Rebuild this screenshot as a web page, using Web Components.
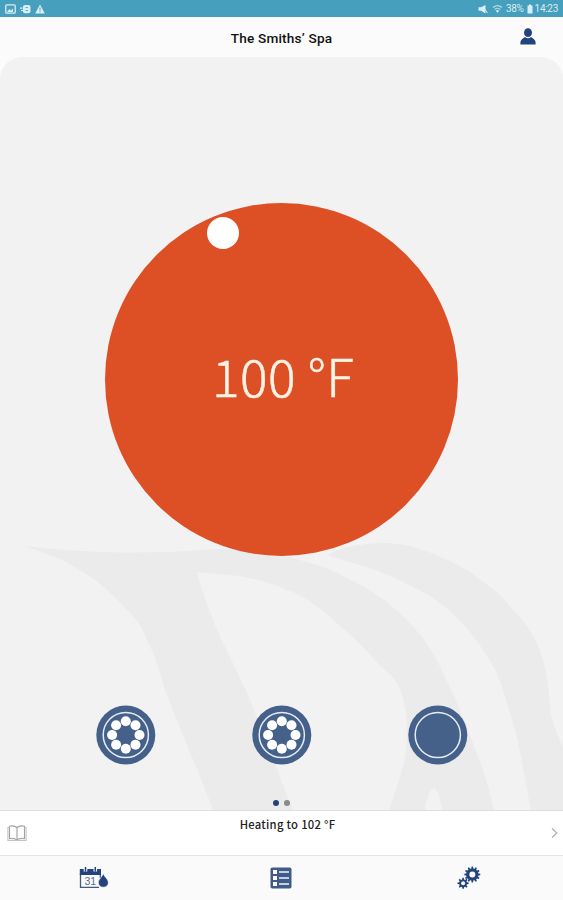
<!DOCTYPE html>
<html lang="en">
<head>
<meta charset="utf-8">
<meta name="viewport" content="width=device-width, initial-scale=1">
<title>Spa</title>
<style>
  body {
    margin: 0;
    background: #fbfbfb;
    font-family: Roboto, "Liberation Sans", sans-serif;
  }
</style>
</head>
<body>
<spa-app></spa-app>

<script>
// status-bar

class StatusBar extends HTMLElement {
  constructor() {
    super();
    const shadow = this.attachShadow({mode: 'open'});
    shadow.innerHTML = `
    <style>
      :host {
        align-items: center;
        background: #459fbd;
        box-sizing: border-box;
        color: #d9eef5;
        display: flex;
        height: 17px;
        justify-content: space-between;
        padding: 1px 5px 0 5px;
      }
      div { align-items: center; display: flex; }
      .left { gap: 4px; }
      .right { font-size: 10px; letter-spacing: -0.3px; line-height: 12px; }
      .right svg:first-child { margin-right: 4px; }
      .pct { margin: 0 3px 0 3px; }
      .time { margin-left: 2px; }
      svg { display: block; }
    </style>
    <div class="left">
      <svg width="11" height="10" viewBox="0 0 11 10"><rect x=".8" y=".8" width="9.4" height="8.4" rx="1" fill="none" stroke="currentColor" stroke-width="1.3"/><path d="M2 8l2.4-3 1.6 1.4L8 4.500V8z" fill="currentColor"/></svg>
      <svg width="11" height="10" viewBox="0 0 11 10"><path d="M0 4.200h2.500M1 6.500h2" stroke="currentColor" stroke-width="1.200"/><rect x="3" y="1" width="7.500" height="8.200" rx="2" fill="currentColor"/><path d="M5.500 3.500h2.500M5.500 6.500h2.500" stroke="#459fbd" stroke-width=".8"/></svg>
      <svg width="10" height="10" viewBox="0 0 10 10"><path d="M5 .5L9.800 9.500H.2z" fill="currentColor"/><path d="M5 3.500v3M5 7.300v1" stroke="#459fbd"/></svg>
    </div>
    <div class="right">
      <svg width="10" height="10" viewBox="0 0 10 10"><path d="M.5 3.300h2.500L7.500 1v8.500L3 6.700H.5z" fill="currentColor"/><path d="M6 4l3.500 5" stroke="currentColor" stroke-width="1"/></svg>
      <svg width="11" height="10" viewBox="0 0 11 10"><path d="M1 3.500Q5.500-.3 10 3.500M2.700 5.500Q5.500 3 8.300 5.500" fill="none" stroke="currentColor" stroke-width="1.100" opacity=".75"/><path d="M3.800 6.500Q5.500 5.500 7.200 6.500L5.500 9z" fill="currentColor"/></svg>
      <span class="pct">38%</span>
      <svg width="6" height="10" viewBox="0 0 6 10"><path d="M2 .5h2v1h1.500v8h-5v-8H2z" fill="currentColor"/></svg>
      <span class="time">14:23</span>
    </div>`;
  }
}

// title-bar

class TitleBar extends HTMLElement {
  constructor() {
    super();
    const shadow = this.attachShadow({mode: 'open'});
    shadow.innerHTML = `
    <style>
      :host {
        align-items: center;
        background: #fbfbfb;
        box-sizing: border-box;
        color: #111;
        display: grid;
        font-size: 13.6px;
        font-weight: 500;
        grid-template-columns: 1fr auto 1fr;
        height: 40px;
        padding: 0 27px;
      }
      .title { grid-column: 2; letter-spacing: 0.2px; line-height: 16px; padding-top: 1px; }
      svg { display: block; justify-self: end; margin-bottom: 1px; }
    </style>
    <span class="title"><slot></slot></span>
    <svg width="16" height="17" viewBox="0 0 16 17" fill="#24427c"><ellipse cx="8" cy="4.700" rx="4" ry="4.400"/><path d="M.4 16.500v-2C.4 12 2.500 11 5 9q3 2.500 6 0c2.500 2 4.600 3 4.600 5.500v2z"/></svg>`;
  }
}

// temp-dial

class TempDial extends HTMLElement {
  constructor() {
    super();
    const shadow = this.attachShadow({mode: 'open'});
    shadow.innerHTML = `
    <style>
      :host {
        align-items: center;
        background: #dd5026;
        border-radius: 50%;
        color: #fff3e6;
        display: flex;
        font-family: "Noto Sans CJK JP", "Noto Sans", sans-serif;
        font-size: 51.5px;
        font-weight: 300;
        height: 353px;
        justify-content: center;
        position: relative;
        width: 353px;
      }
      .value {
        -webkit-text-stroke: 0.5px #fff3e6;
        letter-spacing: 0.4px;
        line-height: 60px;
        padding: 0 0 9px 3px;
        white-space: nowrap;
      }
      .knob {
        background: #fff;
        border-radius: 50%;
        height: 32px;
        left: 102px;
        position: absolute;
        top: 14px;
        width: 32px;
      }
    </style>
    <span class="value"><slot></slot></span>
    <div class="knob"></div>`;
  }
}

// jet-button, with the "on" attribute the jets are drawn

class JetButton extends HTMLElement {
  constructor() {
    super();
    const shadow = this.attachShadow({mode: 'open'});
    let jets = '';
    if (this.hasAttribute('on')) {
      for (let i = 0; i < 8; i++) {
        const a = i * Math.PI / 4;
        const x = (29.8 + 13.7 * Math.cos(a)).toFixed(2);
        const y = (30 + 13.7 * Math.sin(a)).toFixed(2);
        jets += `<circle cx="${x}" cy="${y}" r="5" fill="#fff"/>`;
      }
    }
    shadow.innerHTML = `
    <style>
      :host { display: block; height: 60px; width: 60px; }
      svg { display: block; }
    </style>
    <svg width="60" height="60" viewBox="0 0 60 60">
      <circle cx="29.8" cy="30" r="29.5" fill="#456089"/>
      <circle cx="29.8" cy="30" r="22.6" fill="none" stroke="#e4ecf5" stroke-width="1.5"/>
      ${jets}
    </svg>`;
  }
}

// spa-panel

class SpaPanel extends HTMLElement {
  constructor() {
    super();
    const shadow = this.attachShadow({mode: 'open'});
    shadow.innerHTML = `
    <style>
      :host {
        align-items: center;
        background: #f2f2f2;
        border-radius: 22px 22px 0 0;
        box-sizing: border-box;
        display: flex;
        flex-direction: column;
        height: 753px;
        overflow: hidden;
        padding-top: 146px;
        position: relative;
      }
      .mark { left: 0; position: absolute; top: 0; }
      .jets {
        display: flex;
        gap: 96px;
        margin-top: 149px;
        position: relative;
      }
      .dots { display: flex; gap: 5px; margin-top: 35px; position: relative; }
      .dots i { background: #8a8a8a; border-radius: 50%; height: 6px; width: 6px; }
      .dots i:first-child { background: #24427c; }
    </style>
    <svg class="mark" width="563" height="753" viewBox="0 57 563 753" fill="#ebebeb">
      <path d="M25 546C80 553 150 555 215 549C260 548 320 562 345 577C362 585 374 592 388 603C405 617 416 629 424 640C434 654 439 664 445 677C452 692 458 704 463 717C475 748 487 778 494 810H442C440 799 438 790 434 788C430 790 426 799 425 810H389C398 785 407 760 407 735C407 715 405 702 399 687C394 677 389 673 381 667C369 653 356 639 341 627C322 609 307 597 287 590C274 584 260 580 244 577C228 574 213 574 197 572C201 589 208 606 215 625C225 649 241 677 252 705L293 810H213C197 767 180 730 165 690C158 666 154 653 147 640C142 627 137 620 130 613C118 600 108 590 95 580C84 572 73 566 60 559Z"/>
      <path d="M327 555C340 547 362 543 388 543C403 544 417 547 431 553C449 560 466 568 481 580C494 590 505 598 513 610C523 619 529 628 535 640C541 650 544 661 546 673C549 687 549 700 551 715C554 727 559 737 563 748V810H531C526 785 522 761 517 737C513 722 508 706 503 690C498 674 491 661 481 647C473 635 463 623 452 613C440 602 428 594 413 587C398 579 382 572 366 567Z"/>
    </svg>
    <slot name="dial"></slot>
    <div class="jets"><slot name="jet"></slot></div>
    <div class="dots"><i></i><i></i></div>`;
  }
}

// status-message

class StatusMessage extends HTMLElement {
  constructor() {
    super();
    const shadow = this.attachShadow({mode: 'open'});
    shadow.innerHTML = `
    <style>
      :host {
        background: #fff;
        border-bottom: 1px solid #e4e4e4;
        border-top: 1px solid #dedede;
        box-sizing: border-box;
        color: #222;
        display: grid;
        font-family: "Noto Sans CJK JP", "Noto Sans", sans-serif;
        font-size: 11.3px;
        font-weight: 500;
        grid-template-columns: 1fr auto 1fr;
        height: 46px;
        padding: 0 5px 0 7px;
      }
      svg { align-self: center; display: block; }
      .text { letter-spacing: 0.27px; line-height: 16px; padding: 5px 0 0 10px; }
      .next { justify-self: end; }
    </style>
    <svg width="20" height="17" viewBox="0 0 20 17" fill="none" stroke="#a0a0a0" stroke-width="1.1"><path d="M10 2.500C8 .8 5 .6 2.500 1.200V13.500C5 13 8 13.200 10 15C12 13.200 15 13 17.500 13.500V1.200C15 .6 12 .8 10 2.500V15"/><path d="M2.500 2.500H.9V15.400H19.100V2.500H17.500" stroke="#c4c4c4"/></svg>
    <span class="text"><slot></slot></span>
    <svg class="next" width="7" height="12" viewBox="0 0 7 12" fill="none" stroke="#b0b0b0" stroke-width="1.3"><path d="M1 1.500L5.800 6L1 10.500"/></svg>`;
  }
}

// tab-bar

// outline of a gear, centred on 0,0
function gear(teeth, outer, inner) {
  const pts = [];
  const step = Math.PI * 2 / teeth;
  for (let i = 0; i < teeth; i++) {
    [[-.3, inner], [-.17, outer], [.17, outer], [.3, inner]].forEach(([o, r]) => {
      const a = (i + o) * step;
      pts.push((r * Math.sin(a)).toFixed(2) + ' ' + (-r * Math.cos(a)).toFixed(2));
    });
  }
  return 'M' + pts.join('L') + 'Z';
}

class TabBar extends HTMLElement {
  constructor() {
    super();
    const shadow = this.attachShadow({mode: 'open'});
    shadow.innerHTML = `
    <style>
      :host {
        background: #fafafa;
        display: grid;
        grid-template-columns: repeat(3, 1fr);
        height: 44px;
      }
      svg { align-self: center; display: block; justify-self: center; }
      text { font: 10.5px "Liberation Sans", sans-serif; }
    </style>
    <svg width="30" height="24" viewBox="0 0 30 24">
      <path d="M1.500 7V21.300H20" fill="none" stroke="#405b86" stroke-width="1.3"/>
      <path d="M21.300 8V12" stroke="#405b86" stroke-width="1.200"/>
      <path d="M.8 3H22V9H.8Z" fill="#24427c"/>
      <path d="M6.500 1V5.500M16.300 1V5.500" stroke="#fafafa" stroke-width="3.600"/>
      <path d="M6.500 1V5.500M16.300 1V5.500" stroke="#24427c" stroke-width="1.500"/>
      <text x="5.500" y="18.700" fill="#5b6f90">31</text>
      <path d="M24.300 7.500C25.300 11 29.300 13 29.300 16.500C29.300 19.500 27.200 21.200 24.300 21.200S19.400 19.500 19.400 16.500C19.400 13 23.300 11 24.300 7.500Z" fill="#24427c" stroke="#fafafa" stroke-width=".6"/>
    </svg>
    <svg width="22" height="22" viewBox="0 0 22 22">
      <rect x=".5" y=".5" width="21" height="21" rx="1.800" fill="#405b88"/>
      <path d="M3 3h4v4H3zM3 9h4v4H3zM3 15h4v4H3z" fill="#fff"/>
      <path d="M9 5h10M9 11h10M9 17h10" stroke="#c3d0e2" stroke-width="2.200"/>
    </svg>
    <svg width="24" height="24" viewBox="0 0 24 24" fill="#24427c">
      <g transform="translate(15.300 8.500)"><path d="${gear(12, 8, 6.2)}"/><circle r="3" fill="#fafafa"/></g>
      <g transform="translate(6.100 17.300)"><path d="${gear(8, 5.6, 4)}"/><circle r="2" fill="#fafafa"/></g>
    </svg>`;
  }
}

// spa-app

class SpaApp extends HTMLElement {
  constructor() {
    super();
    const shadow = this.attachShadow({mode: 'open'});
    shadow.innerHTML = `
    <style>
      :host { display: flex; flex-direction: column; height: 900px; overflow: hidden; }
    </style>
    <status-bar></status-bar>
    <title-bar>The Smiths’ Spa</title-bar>
    <spa-panel>
      <temp-dial slot="dial">100 °F</temp-dial>
      <jet-button slot="jet" on></jet-button>
      <jet-button slot="jet" on></jet-button>
      <jet-button slot="jet"></jet-button>
    </spa-panel>
    <status-message>Heating to 102 °F</status-message>
    <tab-bar></tab-bar>`;
  }
}

customElements.define('status-bar', StatusBar);
customElements.define('title-bar', TitleBar);
customElements.define('temp-dial', TempDial);
customElements.define('jet-button', JetButton);
customElements.define('spa-panel', SpaPanel);
customElements.define('status-message', StatusMessage);
customElements.define('tab-bar', TabBar);
customElements.define('spa-app', SpaApp);
</script>
</body>
</html>
